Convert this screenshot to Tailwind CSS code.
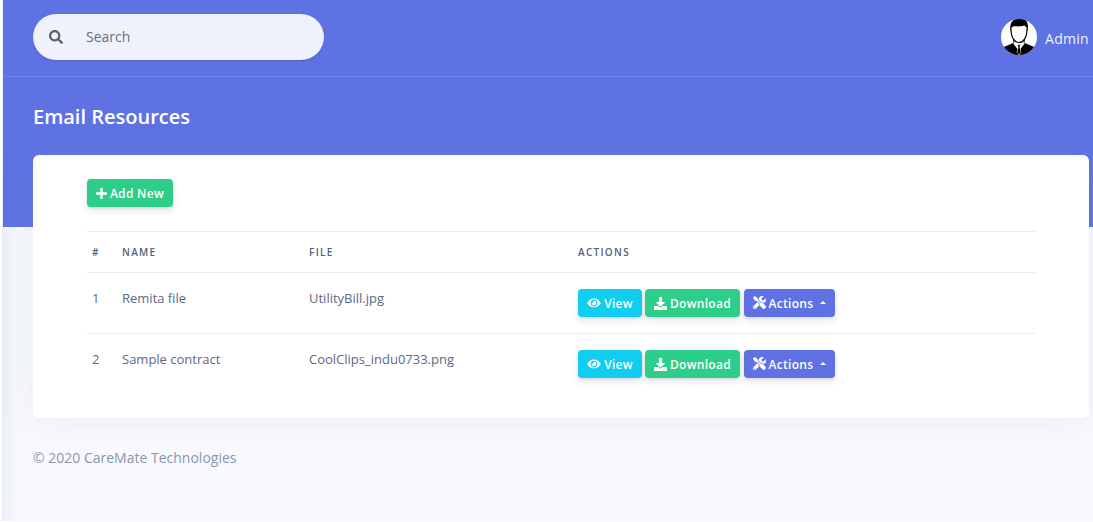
<!DOCTYPE html>
<html lang="en">
<head>
  <meta charset="UTF-8">
  <meta name="viewport" content="width=device-width, initial-scale=1.0">
  <title>Email Resources</title>
  <script src="https://cdn.jsdelivr.net/npm/@tailwindcss/browser@4"></script>
</head>
<body class="bg-white font-['Open_Sans',sans-serif] overflow-hidden">
  <main class="ml-[2px] h-[521px] w-[1091px] bg-[#f8f9fe] shadow-[inset_18px_0_18px_-18px_rgba(136,152,170,0.25)] overflow-hidden">
    <!-- header band -->
    <div class="ml-[1px] h-[227px] bg-[#5e72e4]">
      <nav class="h-[77px] border-b border-white/10 pl-[30px] flex items-start justify-between">
        <div class="mt-[14px] w-[291px] h-[46px] rounded-full bg-[#eff1fc] flex items-center pl-[16px] shadow-sm">
          <svg class="w-[14px] h-[14px] text-[#5f5f68]" viewBox="0 0 512 512" fill="currentColor"><path d="M505 442.700L405.300 343c-4.500-4.500-10.600-7-17-7H372c27.600-35.300 44-79.700 44-128C416 93.100 322.900 0 208 0S0 93.100 0 208s93.100 208 208 208c48.300 0 92.700-16.400 128-44v16.300c0 6.400 2.500 12.500 7 17l99.700 99.700c9.400 9.400 24.600 9.400 33.900 0l28.300-28.300c9.400-9.400 9.400-24.600.1-34zM208 336c-70.700 0-128-57.200-128-128 0-70.700 57.200-128 128-128 70.700 0 128 57.200 128 128 0 70.700-57.200 128-128 128z"/></svg>
          <span class="ml-[23px] -mt-[2px] text-[14px] text-[#6b6f7c]">Search</span>
        </div>
        <div class="mt-[18px] mr-[3px] flex items-center text-white">
          <svg class="w-[36px] h-[38px]" viewBox="0 0 36 38">
            <defs><clipPath id="avatar-clip"><circle cx="18" cy="19" r="18"/></clipPath></defs>
            <g clip-path="url(#avatar-clip)">
              <rect width="36" height="38" fill="#fff"/>
              <path d="M0 38 L0 30 C4 28 9 27 12 25 L18 33 L24 25 C27 27 32 28 36 30 L36 38 Z" fill="#000"/>
              <path d="M16.500 26.500 h3 l-.6 2.500 l1 5.500 l-1.900 2.500 l-1.900-2.500 l1-5.500 Z" fill="#000" stroke="#fff" stroke-width=".6"/>
              <path d="M12.500 20 L13 25 M23.500 20 L23 25" stroke="#000" stroke-width="1" fill="none"/>
              <path d="M10 11 C10 20 14 24.500 18 24.500 C22 24.500 26 20 26 11" fill="#fff" stroke="#000" stroke-width="1.200"/>
              <path d="M9.500 13 C8 5 12 0 19 0 C26 0 28 6 26.500 13 C26 10 25 8 23 7.500 C19 9 14 8 12 8.500 C10.500 9.500 10 11 9.500 13 Z" fill="#000"/>
            </g>
          </svg>
          <span class="ml-[8px] mt-[2px] text-[14px] font-medium tracking-[0.3px] text-[#f0f2ff] w-[45px]">Admin</span>
        </div>
      </nav>
      <h1 class="pl-[30px] mt-[26px] text-[20px] leading-[28px] font-semibold text-white">Email Resources</h1>
    </div>

    <!-- card -->
    <div class="ml-[31px] -mt-[72px] w-[1056px] h-[263px] bg-white rounded-[6px] shadow-[0_0_32px_rgba(136,152,170,0.15)] px-[54px] pt-[24px]">
      <button class="h-[28px] w-[86px] rounded-[4px] bg-[#2dce89] text-white text-[12px] tracking-[0.3px] font-semibold shadow-[0_4px_6px_rgba(50,50,93,0.11),0_1px_3px_rgba(0,0,0,0.08)] flex items-center justify-center gap-[3px]">
        <svg class="w-[11px] h-[13px]" viewBox="0 0 448 512" fill="currentColor"><path d="M416 208H272V64c0-17.700-14.300-32-32-32h-32c-17.700 0-32 14.300-32 32v144H32c-17.700 0-32 14.300-32 32v32c0 17.700 14.300 32 32 32h144v144c0 17.700 14.300 32 32 32h32c17.700 0 32-14.300 32-32V304h144c17.700 0 32-14.300 32-32v-32c0-17.700-14.300-32-32-32z"/></svg>
        <span class="mt-[1px]">Add New</span>
      </button>
      <table class="mt-[24px] w-full table-fixed border-collapse text-[13px] text-[#5c6887]">
        <thead>
          <tr class="border-t border-b border-[#e9ecef] h-[41px] text-[10px] font-semibold tracking-[1.3px] text-left text-[#525f7f]">
            <th class="w-[35px] pl-[5px] font-semibold">#</th>
            <th class="w-[187px] font-semibold">NAME</th>
            <th class="w-[269px] font-semibold">FILE</th>
            <th class="font-semibold">ACTIONS</th>
          </tr>
        </thead>
        <tbody>
          <tr class="border-b border-[#e9ecef] h-[61px]">
            <td class="pl-[5px] align-top pt-[16px]">1</td>
            <td class="align-top pt-[16px]">Remita file</td>
            <td class="align-top pt-[16px]">UtilityBill.jpg</td>
            <td>
              <div class="flex gap-[3px]">
                <button class="h-[28px] w-[64px] rounded-[4px] bg-[#11cdef] text-white text-[12px] tracking-[0.3px] font-semibold shadow-[0_4px_6px_rgba(50,50,93,0.11),0_1px_3px_rgba(0,0,0,0.08)] flex items-center justify-center gap-[3px]">
                  <svg class="w-[14px] h-[12px]" viewBox="0 0 576 512" fill="currentColor"><path d="M572.520 241.400C518.290 135.590 410.930 64 288 64S57.680 135.640 3.480 241.410a32.350 32.350 0 0 0 0 29.190C57.710 376.410 165.070 448 288 448s230.320-71.640 284.520-177.410a32.350 32.350 0 0 0 0-29.190zM288 400a144 144 0 1 1 144-144 143.930 143.930 0 0 1-144 144zm0-240a95.310 95.310 0 0 0-25.310 3.790 47.850 47.850 0 0 1-66.900 66.900A95.780 95.780 0 1 0 288 160z"/></svg>
                  <span class="mt-[1px]">View</span>
                </button>
                <button class="h-[28px] w-[95px] rounded-[4px] bg-[#2dce89] text-white text-[12px] tracking-[0.3px] font-semibold shadow-[0_4px_6px_rgba(50,50,93,0.11),0_1px_3px_rgba(0,0,0,0.08)] flex items-center justify-center gap-[3px]">
                  <svg class="w-[13px] h-[13px]" viewBox="0 0 512 512" fill="currentColor"><path d="M216 0h80c13.300 0 24 10.700 24 24v168h87.700c17.800 0 26.700 21.500 14.100 34.100L269.700 378.300c-7.500 7.500-19.800 7.500-27.300 0L90.100 226.100c-12.600-12.600-3.700-34.100 14.100-34.100H192V24c0-13.300 10.700-24 24-24zm296 376v112c0 13.300-10.700 24-24 24H24c-13.300 0-24-10.700-24-24V376c0-13.300 10.700-24 24-24h146.700l49 49c20.100 20.100 52.500 20.100 72.600 0l49-49H488c13.300 0 24 10.700 24 24zm-124 88c0-11-9-20-20-20s-20 9-20 20 9 20 20 20 20-9 20-20zm64 0c0-11-9-20-20-20s-20 9-20 20 9 20 20 20 20-9 20-20z"/></svg>
                  <span class="mt-[1px]">Download</span>
                </button>
                <button class="ml-[1px] h-[28px] w-[91px] rounded-[4px] bg-[#5e72e4] text-white text-[12px] tracking-[0.3px] font-semibold shadow-[0_4px_6px_rgba(50,50,93,0.11),0_1px_3px_rgba(0,0,0,0.08)] flex items-center justify-center gap-[3px]">
                  <svg class="w-[13px] h-[13px] -mt-[2px]" viewBox="0 0 512 512" fill="currentColor" stroke="currentColor" stroke-width="8"><path d="M501.100 395.700L384 278.600c-23.100-23.100-57.600-27.600-85.400-13.900L192 158.100V96L64 0 0 64l96 128h62.100l106.600 106.600c-13.600 27.800-9.200 62.300 13.900 85.400l117.100 117.100c14.600 14.600 38.200 14.600 52.700 0l52.700-52.700c14.500-14.600 14.500-38.200 0-52.700zM331.700 225c28.300 0 54.900 11 74.900 31l19.400 19.400c15.800-6.900 30.800-16.500 43.800-29.500 37.100-37.100 49.700-89.300 37.900-136.700-2.200-9-13.500-12.100-20.100-5.500l-74.400 74.400-67.900-11.300L334 98.900l74.400-74.400c6.600-6.600 3.400-17.900-5.700-20.200-47.400-11.700-99.600.9-136.600 37.900-28.500 28.500-41.900 66.100-41.200 103.600l82.100 82.100c8.100-1.900 16.500-2.900 24.700-2.900zm-103.900 82l-56.700-56.700L18.700 402.800c-25 25-25 65.500 0 90.500s65.500 25 90.500 0l123.600-123.600c-7.600-19.900-9.900-41.600-5-62.700zM64 472c-13.200 0-24-10.800-24-24 0-13.300 10.700-24 24-24s24 10.700 24 24c0 13.200-10.700 24-24 24z"/></svg>
                  <span class="mt-[1px]">Actions</span>
                  <span class="ml-[4px] -mt-[1px] border-x-[3px] border-b-[3px] border-x-transparent border-b-white"></span>
                </button>
              </div>
            </td>
          </tr>
          <tr class="h-[61px]">
            <td class="pl-[5px] align-top pt-[16px]">2</td>
            <td class="align-top pt-[16px]">Sample contract</td>
            <td class="align-top pt-[16px]">CoolClips_indu0733.png</td>
            <td>
              <div class="flex gap-[3px]">
                <button class="h-[28px] w-[64px] rounded-[4px] bg-[#11cdef] text-white text-[12px] tracking-[0.3px] font-semibold shadow-[0_4px_6px_rgba(50,50,93,0.11),0_1px_3px_rgba(0,0,0,0.08)] flex items-center justify-center gap-[3px]">
                  <svg class="w-[14px] h-[12px]" viewBox="0 0 576 512" fill="currentColor"><path d="M572.520 241.400C518.290 135.590 410.930 64 288 64S57.680 135.640 3.480 241.410a32.350 32.350 0 0 0 0 29.190C57.710 376.410 165.070 448 288 448s230.320-71.640 284.520-177.410a32.350 32.350 0 0 0 0-29.190zM288 400a144 144 0 1 1 144-144 143.930 143.930 0 0 1-144 144zm0-240a95.310 95.310 0 0 0-25.310 3.790 47.850 47.850 0 0 1-66.900 66.900A95.780 95.780 0 1 0 288 160z"/></svg>
                  <span class="mt-[1px]">View</span>
                </button>
                <button class="h-[28px] w-[95px] rounded-[4px] bg-[#2dce89] text-white text-[12px] tracking-[0.3px] font-semibold shadow-[0_4px_6px_rgba(50,50,93,0.11),0_1px_3px_rgba(0,0,0,0.08)] flex items-center justify-center gap-[3px]">
                  <svg class="w-[13px] h-[13px]" viewBox="0 0 512 512" fill="currentColor"><path d="M216 0h80c13.300 0 24 10.700 24 24v168h87.700c17.800 0 26.700 21.500 14.100 34.100L269.700 378.300c-7.500 7.500-19.800 7.500-27.300 0L90.100 226.100c-12.600-12.600-3.700-34.100 14.100-34.100H192V24c0-13.300 10.700-24 24-24zm296 376v112c0 13.300-10.700 24-24 24H24c-13.300 0-24-10.700-24-24V376c0-13.300 10.700-24 24-24h146.700l49 49c20.100 20.100 52.500 20.100 72.600 0l49-49H488c13.300 0 24 10.700 24 24zm-124 88c0-11-9-20-20-20s-20 9-20 20 9 20 20 20 20-9 20-20zm64 0c0-11-9-20-20-20s-20 9-20 20 9 20 20 20 20-9 20-20z"/></svg>
                  <span class="mt-[1px]">Download</span>
                </button>
                <button class="ml-[1px] h-[28px] w-[91px] rounded-[4px] bg-[#5e72e4] text-white text-[12px] tracking-[0.3px] font-semibold shadow-[0_4px_6px_rgba(50,50,93,0.11),0_1px_3px_rgba(0,0,0,0.08)] flex items-center justify-center gap-[3px]">
                  <svg class="w-[13px] h-[13px] -mt-[2px]" viewBox="0 0 512 512" fill="currentColor" stroke="currentColor" stroke-width="8"><path d="M501.100 395.700L384 278.600c-23.100-23.100-57.600-27.600-85.400-13.900L192 158.100V96L64 0 0 64l96 128h62.100l106.600 106.600c-13.600 27.800-9.200 62.300 13.900 85.400l117.100 117.100c14.600 14.600 38.200 14.600 52.700 0l52.700-52.700c14.500-14.600 14.500-38.200 0-52.700zM331.700 225c28.300 0 54.900 11 74.900 31l19.400 19.400c15.800-6.900 30.800-16.500 43.800-29.500 37.100-37.100 49.700-89.300 37.900-136.700-2.200-9-13.500-12.100-20.100-5.500l-74.400 74.400-67.900-11.300L334 98.900l74.400-74.400c6.600-6.600 3.400-17.900-5.700-20.200-47.400-11.700-99.600.9-136.600 37.900-28.500 28.500-41.900 66.100-41.200 103.600l82.100 82.100c8.100-1.900 16.500-2.900 24.700-2.900zm-103.900 82l-56.700-56.700L18.700 402.800c-25 25-25 65.500 0 90.500s65.500 25 90.500 0l123.600-123.600c-7.600-19.900-9.900-41.600-5-62.700zM64 472c-13.200 0-24-10.800-24-24 0-13.300 10.700-24 24-24s24 10.700 24 24c0 13.200-10.700 24-24 24z"/></svg>
                  <span class="mt-[1px]">Actions</span>
                  <span class="ml-[4px] -mt-[1px] border-x-[3px] border-b-[3px] border-x-transparent border-b-white"></span>
                </button>
              </div>
            </td>
          </tr>
        </tbody>
      </table>
    </div>

    <footer class="pl-[31px] mt-[30px] text-[14px] leading-[20px] text-[#8898aa]">© 2020 CareMate Technologies</footer>
  </main>
</body>
</html>
